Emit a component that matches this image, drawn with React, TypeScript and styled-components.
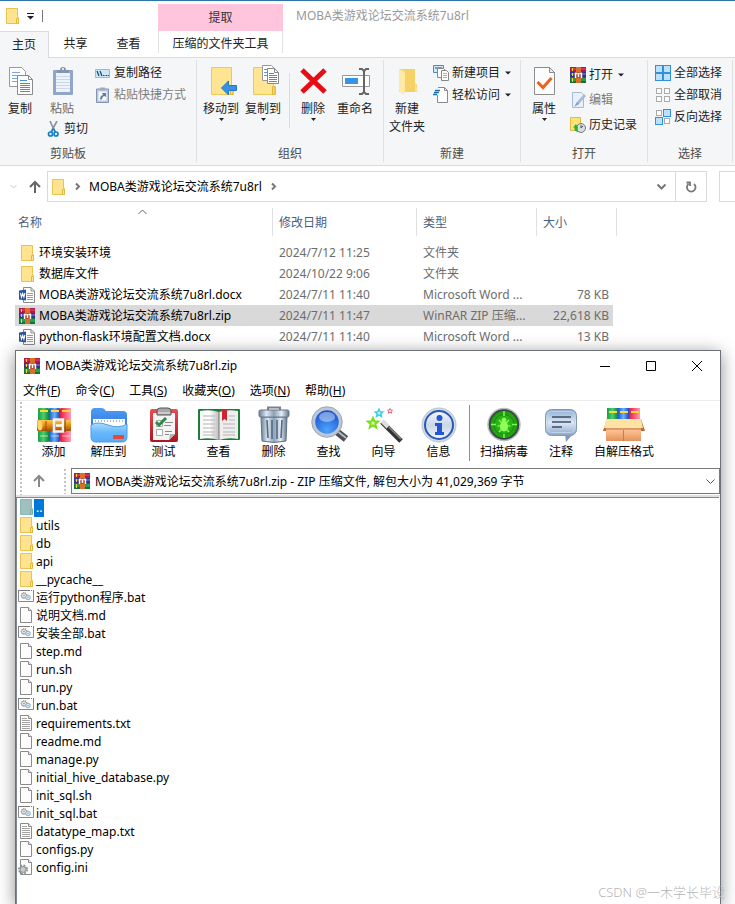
import React from "react";
import styled, { createGlobalStyle, css } from "styled-components";

const GlobalStyle = createGlobalStyle`
  * { box-sizing: border-box; }
  body {
    margin: 0;
    background: #fff;
    color: #000;
    font-family: "Noto Sans", "Noto Sans CJK SC", sans-serif;
    font-size: 12px;
    line-height: 18px;
  }
  button, input, select {
    font: inherit;
    color: inherit;
    background: none;
    border: 0;
    padding: 0;
    margin: 0;
    border-radius: 0;
  }
  svg { display: block; flex: none; }
`;

/* ---------- Explorer window ---------- */

const Desktop = styled.div`
  position: relative;
  display: flex;
  flex-direction: column;
  min-height: 100vh;
  overflow: hidden;
  border-top: 1px solid #2c74a4;
`;

const TitleBar = styled.header`
  display: flex;
  align-items: stretch;
  height: 30px;
`;

const QuickAccess = styled.div`
  display: flex;
  align-items: center;
  gap: 7px;
  width: 158px;
  padding-left: 4px;
`;

const QuickSeparator = styled.span`
  width: 1px;
  height: 12px;
  background: #777;
`;

const ContextTab = styled.div`
  display: flex;
  align-items: center;
  justify-content: center;
  width: 125px;
  margin-top: 3px;
  background: #ffc5dd;
  color: #333;
`;

const WindowTitle = styled.h1`
  margin: 0;
  padding: 6px 13px;
  font-size: 12px;
  font-weight: 400;
  color: #999;
`;

const TabStrip = styled.nav`
  display: flex;
  height: 27px;
  border-bottom: 1px solid #dadbdc;
`;

const Tab = styled.button<{ $width: number; $active?: boolean; $context?: boolean }>`
  width: ${(p) => p.$width}px;
  color: #222;
  ${(p) =>
    p.$active &&
    css`
      height: 27px;
      background: #f5f6f7;
      border: 1px solid #dadbdc;
      border-width: 1px 1px 0 0;
    `}
  ${(p) =>
    p.$context &&
    css`
      height: 22px;
      margin-left: 3px;
      padding-top: 4px;
      border: 1px solid #e2e2e2;
      border-width: 0 1px;
    `}
`;

const Ribbon = styled.section`
  display: flex;
  background: #f5f6f7;
  border-bottom: 1px solid #dadbdc;
`;

const Group = styled.div<{ $width: number }>`
  display: flex;
  flex-direction: column;
  flex: none;
  width: ${(p) => p.$width}px;
  margin: 2px 0 3px;
  border-right: 1px solid #e0e1e3;
`;

const GroupBody = styled.div<{ $pad?: number }>`
  display: flex;
  align-items: flex-start;
  height: 86px;
  padding-left: ${(p) => p.$pad ?? 0}px;
`;

const GroupLabel = styled.div<{ $shift?: boolean }>`
  line-height: 16px;
  color: #4c4c4c;
  text-align: center;
  padding-right: ${(p) => (p.$shift ? 60 : 0)}px;
`;

const BigButton = styled.button<{ $width: number; $muted?: boolean }>`
  display: flex;
  flex-direction: column;
  align-items: center;
  width: ${(p) => p.$width}px;
  padding-top: 5px;
  color: ${(p) => (p.$muted ? "#6d6d6d" : "#222")};
  svg:first-child { margin-bottom: 3px; }
`;

const SmallColumn = styled.div<{ $row?: number; $left?: number }>`
  display: grid;
  grid-auto-rows: ${(p) => p.$row ?? 22}px;
  padding-top: 2px;
  margin-left: ${(p) => p.$left ?? 0}px;
`;

const SmallButton = styled.button<{ $muted?: boolean }>`
  display: flex;
  align-items: center;
  gap: 3px;
  padding: 0 3px;
  white-space: nowrap;
  color: ${(p) => (p.$muted ? "#7c7c7c" : "#222")};
`;

const ClipboardColumn = styled.div`
  display: flex;
  flex-direction: column;
  height: 86px;
`;

const ClipboardTop = styled.div`
  display: flex;
  align-items: flex-start;
  height: 60px;
`;

const CutRow = styled.div`
  padding-left: 42px;
`;

const GroupDivider = styled.span`
  width: 1px;
  height: 55px;
  margin: 13px 2px 0 5px;
  background: #dcdddf;
`;

const AddressRow = styled.div`
  display: flex;
  height: 42px;
  padding: 5px 0 6px;
`;

const NavButton = styled.button<{ $width: number }>`
  display: grid;
  place-items: center;
  width: ${(p) => p.$width}px;
`;

const AddressBox = styled.div`
  display: flex;
  flex: 1;
  margin: 0 12px 0 2px;
  border: 1px solid #d9d9d9;
`;

const Crumbs = styled.nav`
  display: flex;
  align-items: center;
  flex: 1;
  gap: 6px;
  padding-left: 2px;
`;

const RefreshButton = styled(NavButton)`
  border-left: 1px solid #d9d9d9;
`;

const SearchInput = styled.input`
  width: 16px;
  border: 1px solid #d9d9d9;
  border-right: 0;
`;

const FileTable = styled.table`
  table-layout: fixed;
  width: 602px;
  margin-left: 15px;
  border-spacing: 0;
`;

const HeadCell = styled.th`
  position: relative;
  height: 34px;
  padding: 0;
  vertical-align: top;
  font-weight: 400;
`;

const SortButton = styled.button<{ $first?: boolean }>`
  display: block;
  width: 100%;
  height: 28px;
  padding: 2px 0 0 ${(p) => (p.$first ? 3 : 6)}px;
  text-align: left;
  color: #4a5f7f;
  border-right: 1px solid #e0e0e0;
`;

const SortMark = styled.span`
  position: absolute;
  top: 0;
  left: 122px;
`;

const FileRow = styled.tr<{ $selected?: boolean }>`
  td { background-color: ${(p) => (p.$selected ? "#d9d9d9" : "transparent")}; }
`;

const Cell = styled.td<{ $end?: boolean }>`
  height: 21px;
  padding: 0 0 0 6px;
  color: #6d6d6d;
  white-space: nowrap;
  ${(p) =>
    p.$end &&
    css`
      padding: 0 4px 0 0;
      text-align: right;
      border-right: 4px solid transparent;
      background-clip: padding-box;
    `}
`;

const NameCell = styled(Cell)`
  padding-left: 4px;
  color: #000;
`;

const FileName = styled.div`
  display: flex;
  align-items: center;
  gap: 4px;
`;

/* ---------- Archive window ---------- */

const ArchiveWindow = styled.main`
  position: relative;
  display: flex;
  flex-direction: column;
  flex: 1;
  margin: 3px 14px 0 15px;
  background: #fff;
  border: 1px solid #6c7078;
  border-bottom: 0;
  box-shadow: 0 3px 16px rgba(0, 0, 0, 0.45);
`;

const ArchiveTitle = styled.div`
  display: flex;
  align-items: center;
  gap: 5px;
  height: 30px;
  padding-left: 8px;
`;

const ArchiveName = styled.h2`
  flex: 1;
  margin: 0;
  font-size: 12px;
  font-weight: 400;
`;

const CaptionButtons = styled.div`
  display: flex;
`;

const CaptionButton = styled.button`
  display: grid;
  place-items: center;
  width: 46px;
  height: 30px;
`;

const MenuBar = styled.nav`
  display: flex;
  gap: 1px;
  height: 20px;
  border-bottom: 1px solid #ececec;
`;

const MenuButton = styled.button`
  padding: 0 7px;
`;

const Bars = styled.div`
  display: flex;
  border-bottom: 2px solid #dfe0e2;
`;

const Grip = styled.span`
  width: 2px;
  margin: 1px 0 0 4px;
  background: repeating-linear-gradient(#c4c4c4 0 2px, transparent 2px 4px);
`;

const BarRows = styled.div`
  flex: 1;
`;

const Tools = styled.div`
  display: flex;
  padding: 5px 0 0 4px;
  height: 66px;
`;

const Tool = styled.button<{ $width?: number }>`
  display: flex;
  flex-direction: column;
  align-items: center;
  width: ${(p) => p.$width ?? 55}px;
  white-space: nowrap;
`;

const ToolDivider = styled.span`
  width: 1px;
  height: 56px;
  margin: -1px 4px 0 3px;
  background: #909090;
`;

const PathRow = styled.div`
  display: flex;
  gap: 5px;
  height: 28px;
  padding: 1px 0 1px;
`;

const PathBox = styled.label`
  display: flex;
  align-items: center;
  flex: 1;
  gap: 5px;
  padding: 0 3px 0 2px;
  border: 1px solid #7a7a7a;
`;

const PathSelect = styled.select`
  appearance: none;
  flex: 1;
  height: 24px;
  padding-top: 2px;
  outline: none;
`;

const Listing = styled.ul`
  flex: 1;
  margin: 0 1px 0 0;
  padding: 1px 0 0 1px;
  list-style: none;
  border: 1px solid #828790;
  border-width: 1px 0 0 1px;
`;

const Entry = styled.button<{ $selected?: boolean }>`
  display: flex;
  align-items: flex-start;
  height: 18px;
  svg { ${(p) => p.$selected && "filter: sepia(1) hue-rotate(120deg) brightness(0.75);"} }
  span {
    padding: 0 2px;
    ${(p) => p.$selected && "background: #0078d7; color: #fff;"}
  }
`;

const Watermark = styled.div`
  position: absolute;
  right: 10px;
  bottom: 2px;
  font-size: 13px;
  font-weight: 300;
  line-height: 20px;
  color: #b4b4b4;
`;

/* ---------- Small icons ---------- */

const Folder = () => (
  <svg width="16" height="16" viewBox="0 0 16 16">
    <path d="M2.500.5h11v9h1v6h-12z" fill="#ffe390" stroke="#e9c54f" />
    <path d="M12.500 15.500v-5h2v5z" fill="#ffe79c" stroke="#e3b93a" />
  </svg>
);

const Rar = () => (
  <svg width="16" height="16" viewBox="0 0 16 16">
    <path d="M0 0h16v5H0z" fill="#a81c46" />
    <path d="M1 1h15v2H1z" fill="#d42f5a" />
    <path d="M0 5h16v5H0z" fill="#35328c" />
    <path d="M1 6h15v2H1z" fill="#5f5cc8" />
    <path d="M0 10h16v6H0z" fill="#12703a" />
    <path d="M1 11h15v3H1z" fill="#25a04a" />
    <path d="M2 1h1v3H2zM2 6h1v3H2zM2 11h1v4H2z" fill="#f3d33c" />
    <path d="M6 0h5v16H6z" fill="#d9702a" />
    <path d="M5 5h7v6H5z" fill="#bf4a20" />
    <path d="M5.500 11V6.500h2M11.500 11V6.500h-2M8.500 6v4" stroke="#fff" strokeWidth="1.400" fill="none" />
  </svg>
);

const Word = () => (
  <svg width="16" height="16" viewBox="0 0 16 16">
    <path d="M4.500.5h7.500l3.500 3.500v11.500h-11z" fill="#fff" stroke="#8a8a8a" />
    <path d="M12 .5V4h3.500" fill="none" stroke="#8a8a8a" />
    <path d="M8 6.500h6M8 8.500h6M8 10.500h6M8 12.500h6" stroke="#9a9a9a" />
    <path d="M0 3.500 7 2.500v11l-7-1z" fill="#2b579a" />
    <path d="m1.500 6 1 4L3.700 6.500 4.900 10l1-4" fill="none" stroke="#fff" strokeWidth="1.100" />
  </svg>
);

const Page = () => (
  <svg width="16" height="16" viewBox="0 0 16 16">
    <path d="M2.500.5h8l3 3v12h-11z" fill="#fdfdfd" stroke="#8b8b8b" />
    <path d="M10.500.5v3h3" fill="#eee" stroke="#8b8b8b" />
  </svg>
);

const TextPage = () => (
  <svg width="16" height="16" viewBox="0 0 16 16">
    <path d="M2.500.5h8l3 3v12h-11z" fill="#fdfdfd" stroke="#8b8b8b" />
    <path d="M10.500.5v3h3" fill="#eee" stroke="#8b8b8b" />
    <path d="M4 3.500h5M4 5.500h8M4 7.500h8M4 9.500h8M4 11.500h8M4 13.500h8" stroke="#a3a3a3" />
  </svg>
);

const Batch = () => (
  <svg width="16" height="16" viewBox="0 0 16 16">
    <path d="M.5 1.500h15v11H.5z" fill="#fff" stroke="#86888c" />
    <path d="M0 1.500h16" stroke="#77797d" />
    <path d="M12 1.500h1M14 1.500h1" stroke="#fff" />
    <circle cx="6" cy="6.500" r="2.500" fill="#ececec" stroke="#a2a2a2" />
    <circle cx="6" cy="6.500" r="3" fill="none" stroke="#8e8e8e" strokeDasharray="1 1.100" />
    <circle cx="6" cy="6.500" r=".8" fill="#888" />
    <circle cx="10" cy="8.500" r="2.300" fill="#d8ecf7" stroke="#80b2d0" />
    <circle cx="10" cy="8.500" r=".7" fill="#6fa5c6" />
  </svg>
);

const Ini = () => (
  <svg width="16" height="16" viewBox="0 0 16 16">
    <path d="M2.500.5h8l3 3v12h-11z" fill="#fdfdfd" stroke="#8b8b8b" />
    <path d="M10.500.5v3h3" fill="#eee" stroke="#8b8b8b" />
    <circle cx="5" cy="10.500" r="4" fill="none" stroke="#8d9093" strokeWidth="2" strokeDasharray="1.800 1.340" />
    <circle cx="5" cy="10.500" r="2.800" fill="#dadcde" stroke="#999c9f" strokeWidth="1.300" />
    <circle cx="5" cy="10.500" r="1" fill="#fff" stroke="#999" strokeWidth=".6" />
  </svg>
);

const Caret = () => (
  <svg width="5" height="4" viewBox="0 0 5 4">
    <path d="M0 0h5L2.500 3z" fill="#222" />
  </svg>
);

const SmallCaret = () => (
  <svg width="9" height="6" viewBox="0 0 9 6">
    <path d="M2 1.500h6L5 4.500z" fill="#222" />
  </svg>
);

const CustomizeMark = () => (
  <svg width="8" height="8" viewBox="0 0 8 8">
    <path d="M0 1.500h7" stroke="#222" />
    <path d="M0 4h7L3.500 7.500z" fill="#222" />
  </svg>
);

const Chevron = ({ d, color = "#777", width = 2 }: { d: string; color?: string; width?: number }) => (
  <svg width="11" height="11" viewBox="0 0 11 11">
    <path d={d} fill="none" stroke={color} strokeWidth={width} />
  </svg>
);

const RIGHT = "m4 2.500 3 3-3 3";
const DOWN = "M1.500 3.500 5.500 7.500 9.500 3.500";

const UpArrow = ({ color }: { color: string }) => (
  <svg width="14" height="14" viewBox="0 0 14 14">
    <path d="M7 13V2M2 7l5-5 5 5" fill="none" stroke={color} strokeWidth="2" />
  </svg>
);

const PathIcon = () => (
  <svg width="16" height="16" viewBox="0 0 16 16">
    <path d="M.5 4.500h14v8H.5z" fill="#cce8f8" stroke="#8dbfdd" />
    <path d="m2 6 2 5M5 6l2 5" stroke="#14507a" strokeWidth="1.300" />
    <path d="M8 10.500h1.500M10.500 10.500H12M12.700 10.500H14" stroke="#14507a" />
  </svg>
);

const ShortcutIcon = () => (
  <svg width="16" height="16" viewBox="0 0 16 16">
    <path d="M1.500 2h12v13.500h-12z" fill="#bfcbdd" stroke="#8194b4" />
    <path d="M5 .5h5v3H5z" fill="#9caac3" />
    <path d="M3.500 4.500h8v9h-8z" fill="#f5f8fc" />
    <path d="M5 12.500c0-2.500 1-4 3-4.500L7 6h4v4L9.500 9C7.500 9.500 7 11 7 12.500z" fill="#637ba5" />
  </svg>
);

const Scissors = () => (
  <svg width="16" height="16" viewBox="0 0 16 16">
    <path d="m5 0 5 11M12 0 6 11" stroke="#8795a2" strokeWidth="1.700" />
    <circle cx="5.500" cy="13" r="2" fill="none" stroke="#1680c4" strokeWidth="1.700" />
    <circle cx="11" cy="13" r="2" fill="none" stroke="#1680c4" strokeWidth="1.700" />
    <path d="m8.500 7.500-2 3.500M8.500 7.500l2 3.500" stroke="#1680c4" strokeWidth="1.500" />
  </svg>
);

const NewItem = () => (
  <svg width="16" height="16" viewBox="0 0 16 16">
    <path d="M.5.5h10v7H.5z" fill="#cfe9f8" stroke="#4b8db8" />
    <path d="M2 2h7v2H2z" fill="#5da5d0" />
    <path d="M4.500 3.500h6l2 2v7h-8z" fill="#fff" stroke="#888" />
    <path d="M8.500 5.500h5l2 2v8h-7z" fill="#fff" stroke="#888" />
    <path d="M10 8.500h4M10 10.500h4M10 12.500h4" stroke="#8db4e8" />
  </svg>
);

const EasyAccess = () => (
  <svg width="16" height="16" viewBox="0 0 16 16">
    <path d="M5 .5h6.500l3 3v12H4.500V8" fill="#fff" stroke="#8a8a8a" />
    <path d="M11.500.5v3h3" fill="none" stroke="#8a8a8a" />
    <path d="M2 3.500h5M1 5.500h5M0 7.500h4" stroke="#1c6fb3" strokeWidth="1.400" />
  </svg>
);

const EditIcon = () => (
  <svg width="16" height="16" viewBox="0 0 16 16">
    <path d="M2.500.5h9l2 2v13h-11z" fill="#e9f0f9" stroke="#a9bad3" />
    <path d="m6 13 1-3 7-8 2 2-7 8z" fill="#a8bcd9" />
    <path d="m4 15 3-5 2 2z" fill="#839dc5" />
  </svg>
);

const HistoryIcon = () => (
  <svg width="16" height="16" viewBox="0 0 16 16">
    <path d="M.5.5h10v13H.5z" fill="#ffe27a" stroke="#e0ba45" />
    <circle cx="11" cy="11" r="4.500" fill="#d8dcdc" stroke="#747c7c" />
    <path d="M11 8v3l2-2" fill="none" stroke="#555" />
    <path d="M3 10.500 6 7l2 3.500c-1 2 0 3.500 1 4.500-3 0-5-1.500-4.500-4.500z" fill="#27b531" />
  </svg>
);

type TilesProps = { on: boolean[] };
const Tiles = ({ on }: TilesProps) => (
  <svg width="16" height="16" viewBox="0 0 16 16">
    {on.map((active, i) => {
      const x = (i % 2) * 8;
      const y = i > 1 ? 8 : 0;
      return active ? (
        <rect key={i} x={x + 0.5} y={y + 0.5} width="7" height="7" fill="#bfe0fa" stroke="#2f90dc" />
      ) : (
        <rect key={i} x={x + 1.5} y={y + 1.5} width="5" height="5" fill="#fff" stroke="#aaa" />
      );
    })}
  </svg>
);

/* ---------- Ribbon icons, 32px ---------- */

const CopyIcon = () => (
  <svg width="32" height="32" viewBox="0 0 32 32">
    <path d="M5.500 2.500h12l4 4v15h-16z" fill="#fff" stroke="#999" />
    <path d="M8 7.500h8M8 10.500h8M8 13.500h8M8 16.500h8" stroke="#76a7e2" />
    <path d="M13.500 10.500h11l4 4v15h-15z" fill="#fff" stroke="#8b8b8b" />
    <path d="M24.500 10.500v4h4" fill="none" stroke="#8b8b8b" />
    <path d="M16 15.500h7M16 18.500h10M16 20.500h10M16 22.500h10M16 24.500h10M16 26.500h10" stroke="#4a8bdc" />
  </svg>
);

const PasteIcon = () => (
  <svg width="32" height="32" viewBox="0 0 32 32">
    <rect x="7" y="5" width="20" height="25" rx="1" fill="#8fa5c9" />
    <path d="M10 8h14v19H10z" fill="#eef3fa" />
    <path d="M10 11.500h14M10 14.500h14M10 17.500h14M10 20.500h14M10 23.500h14" stroke="#cbd8e9" />
    <path d="M11 8V5h3a3 3 0 0 1 6 0h3v3z" fill="#8594b0" />
    <circle cx="17" cy="4" r="1" fill="#fff" />
  </svg>
);

const FolderBase = () => (
  <>
    <path d="M6.500 2.500h20v19h2v8h-22z" fill="#ffe591" stroke="#ecc95b" />
    <path d="M25.500 29.500v-8H28v8z" fill="#f8d671" stroke="#e2b73d" />
  </>
);

const MoveTo = () => (
  <svg width="32" height="32" viewBox="0 0 32 32">
    <FolderBase />
    <path d="m16.500 23 7-7v4.500h8v5h-8V30z" fill="#3692e4" stroke="#2278c4" />
  </svg>
);

const CopyTo = () => (
  <svg width="32" height="32" viewBox="0 0 32 32">
    <FolderBase />
    <path d="M15.500.5h9l3 3v12h-12z" fill="#fff" stroke="#999" />
    <path d="M17 4.500h6M17 7.500h8M17 10.500h8" stroke="#5b97df" />
    <path d="M20.500 3.500h7l4 4v11h-11z" fill="#fff" stroke="#888" />
    <path d="M27.500 3.500v4h4" fill="none" stroke="#888" />
    <path d="M22 8.500h5M22 10.500h8M22 12.500h8M22 14.500h8M22 16.500h8" stroke="#4a8bdc" />
  </svg>
);

const DeleteIcon = () => (
  <svg width="32" height="32" viewBox="0 0 32 32">
    <path d="m5 5 23 22M28 5 5 27" stroke="#e50e16" strokeWidth="5" />
  </svg>
);

const RenameIcon = () => (
  <svg width="32" height="32" viewBox="0 0 32 32">
    <path d="M3.500 10.500h27v11h-27z" fill="#fff" stroke="#999" />
    <path d="M6 13h13v6H6z" fill="#3394e8" />
    <path d="M25 6v21M20 4h3l2 2 2-2h3M20 29h3l2-2 2 2h3" fill="none" stroke="#666" strokeWidth="2" />
  </svg>
);

const NewFolder = () => (
  <svg width="32" height="32" viewBox="0 0 32 32">
    <path d="M8 4h16v14l2 2v7H8z" fill="#f6d266" />
    <path d="m8 4 6 3v18l-1 5-5-4z" fill="#ffe9a8" />
    <path d="M24 18v9h3z" fill="#ffe18a" />
  </svg>
);

const PropertiesIcon = () => (
  <svg width="32" height="32" viewBox="0 0 32 32">
    <path d="M6.500 2.500h15l5 5v22h-20z" fill="#fcfcfc" stroke="#8c8c8c" />
    <path d="M21.500 2.500v5h5z" fill="#eee" stroke="#8c8c8c" />
    <path d="m9.500 17 5.500 5.500L23.500 13" fill="none" stroke="#f0601d" strokeWidth="3" />
  </svg>
);

/* ---------- Archive toolbar icons ---------- */

const ToolSvg = ({ children, width = 44 }: { children: React.ReactNode; width?: number }) => (
  <svg width={width} height="37" viewBox={`0 0 ${width} 37`}>
    {children}
  </svg>
);

const Gradient = ({ id, stops, flat }: { id: string; stops: string[]; flat?: boolean }) => (
  <linearGradient id={id} x1="0" y1="0" x2={flat ? 1 : 0} y2={flat ? 0 : 1}>
    {stops.map((c, i) => (
      <stop key={i} offset={i / (stops.length - 1)} stopColor={c} />
    ))}
  </linearGradient>
);

const AddIcon = () => (
  <ToolSvg>
    <defs>
      <Gradient id="bookG" flat stops={["#1f9a45", "#46d16c", "#14803a"]} />
      <Gradient id="bookB" flat stops={["#1d55d8", "#69b1ff", "#1c46bd"]} />
      <Gradient id="bookR" flat stops={["#d81d3d", "#ff5877", "#f7a1b8"]} />
      <Gradient id="belt" stops={["#ffc84c", "#e88812", "#9c4f08"]} />
    </defs>
    <rect x="6" y="2" width="11" height="34" rx="1" fill="url(#bookG)" />
    <rect x="17" y="2" width="11" height="34" rx="1" fill="url(#bookB)" />
    <rect x="28" y="2" width="11" height="34" rx="1" fill="url(#bookR)" />
    <path d="M8 5h8M19 5h8M30 5h8" stroke="#ffd92e" strokeWidth="2" />
    <path d="M8 30h8M19 30h8M30 30h8" stroke="#fff" strokeOpacity=".3" strokeWidth="2" />
    <rect x="5" y="14" width="34" height="11" rx="1" fill="url(#belt)" />
    <ellipse cx="8" cy="19.500" rx="2.500" ry="5" fill="#ffd568" />
    <path d="M14 15v9" stroke="#9a4d08" />
    <rect x="22" y="13.500" width="9" height="12" fill="none" stroke="#f2f2f2" strokeWidth="2.500" />
    <path d="M24 19.500h7" stroke="#fff" strokeWidth="2.500" />
    <path d="M33 14v12" stroke="#71400d" />
  </ToolSvg>
);

const ExtractIcon = () => (
  <ToolSvg>
    <defs>
      <Gradient id="dirBack" stops={["#4e9cf4", "#276ad9"]} />
      <Gradient id="dirFront" stops={["#aadcff", "#67b7fb", "#5aabf5"]} />
    </defs>
    <path d="M4 6q0-4 4-4h7q2 0 4 3h17q4 0 4 4v20H4z" fill="url(#dirBack)" />
    <path d="M6 13h32v10H6z" fill="#fff" />
    <path d="M8 15h28" stroke="#b2b8c2" strokeWidth="2" strokeDasharray="1 2" />
    <path d="M4 19q6-4 17 0t19-1v13q0 5-5 5H9q-5 0-5-5z" fill="url(#dirFront)" stroke="#4d9beb" />
    <rect x="26" y="29" width="11" height="4" rx="1" fill="#e24a38" />
  </ToolSvg>
);

const TestIcon = () => (
  <ToolSvg>
    <defs><Gradient id="board" stops={["#f04b50", "#a91520"]} /></defs>
    <rect x="8" y="3" width="28" height="33" rx="2" fill="url(#board)" />
    <path d="M11 7h22v21l-6 6H11z" fill="#f4f4f4" />
    <path d="m27 34 1-6h5z" fill="#b4b4b4" />
    <path d="M15 9V5q0-3 3-3h8q3 0 3 3v4z" fill="#a9a9a9" stroke="#555" />
    <path d="M16 7h12" stroke="#eee" />
    <path d="M14.500 14.500h6v6h-6zM14.500 23.500h6v6h-6z" fill="#fff" stroke="#aaa" />
    <path d="m14 16 3 3 7-7" fill="none" stroke="#268e42" strokeWidth="3" />
    <path d="M23 16.500h8M22 19.500h7M23 25.500h7M23 28.500h4" stroke="#8b8b8b" />
  </ToolSvg>
);

const ViewIcon = () => (
  <ToolSvg>
    <defs><Gradient id="pageL" flat stops={["#f6f6f6", "#fff", "#bdbdbd"]} /></defs>
    <rect x="1" y="3" width="42" height="31" rx="1" fill="#1c7c38" />
    <path d="M3 5q10-2 19 1v28q-9-3-19-1z" fill="url(#pageL)" />
    <path d="M41 5q-10-2-19 1v28q9-3 19-1z" fill="#eeeeee" />
    <path d="M6 10h12M6 14h12M6 18h12M6 22h12M6 26h12M6 29h12M26 18h12M26 22h12M26 26h12M26 29h12M32 10h6M32 14h6" stroke="#b3b3b3" />
    <path d="M22 6v28" stroke="#777" />
    <path d="M25 4h5v11l-2.500-2L25 15z" fill="#cc2630" />
  </ToolSvg>
);

const TrashIcon = () => (
  <ToolSvg>
    <defs><Gradient id="bin" flat stops={["#6c7f95", "#dce7f0", "#8da1b6", "#e5edf4", "#60758c"]} /></defs>
    <path d="M16 4V1.500h12V4" fill="none" stroke="#76818d" strokeWidth="2" />
    <path d="M9 11h26l-1 24q-12 3-24 0z" fill="url(#bin)" stroke="#607286" />
    <path d="m15 14 1 18M20 14v19M25 14v19M30 14l-1 18" stroke="#546a83" strokeWidth="1.600" />
    <rect x="7" y="4" width="30" height="7" rx="1.500" fill="url(#bin)" stroke="#65778b" />
  </ToolSvg>
);

const FindIcon = () => (
  <ToolSvg>
    <defs>
      <radialGradient id="lens" cx=".5" cy=".8" r=".8">
        <stop offset="0" stopColor="#4ca5ff" />
        <stop offset="1" stopColor="#1748c5" />
      </radialGradient>
    </defs>
    <path d="m29 25 10 8" stroke="#4c5055" strokeWidth="7" />
    <path d="m29 24 10 8" stroke="#b4b9bf" strokeWidth="2" />
    <circle cx="20" cy="16" r="13.500" fill="url(#lens)" stroke="#bcc7d5" strokeWidth="3.500" />
    <circle cx="20" cy="16" r="15.300" fill="none" stroke="#8f9bab" strokeWidth=".8" />
    <ellipse cx="20" cy="11" rx="8" ry="5" fill="#fff" opacity=".4" />
  </ToolSvg>
);

const starPath = "M0-5 1.500-1.700 5-1.500 2.300.9 3.200 4.500 0 2.500-3.200 4.500-2.300.9-5-1.500-1.500-1.700z";

const WizardIcon = () => (
  <ToolSvg>
    <path d="m20 16 19 19" stroke="#333" strokeWidth="5" />
    <path d="m20 15 6 6" stroke="#ddd" strokeWidth="4" />
    <path d="m27 21 12 12" stroke="#8a8a8a" strokeWidth="1.500" />
    <path d={starPath} transform="translate(11 17)" fill="#d7ff8c" stroke="#7add1c" strokeWidth="2" />
    <path d={starPath} transform="translate(17 7) scale(.75)" fill="#d9fbff" stroke="#37cfee" strokeWidth="2" />
    <path d={starPath} transform="translate(28 5) scale(.5)" fill="#fff" stroke="#f0646c" strokeWidth="2" />
  </ToolSvg>
);

const InfoIcon = () => (
  <ToolSvg>
    <defs><Gradient id="disc" stops={["#f5f8fc", "#cbd7e6", "#f0f4f8"]} /></defs>
    <circle cx="22" cy="19" r="17" fill="#d3dae3" stroke="#bac4cf" />
    <circle cx="22" cy="19" r="14" fill="url(#disc)" stroke="#2857bd" strokeWidth="2" />
    <circle cx="22.500" cy="12" r="3" fill="#2455d3" />
    <path d="M18 17h7v9h2v3h-9v-3h2v-6h-2z" fill="#2455d3" />
  </ToolSvg>
);

const ScanIcon = () => (
  <ToolSvg>
    <defs>
      <radialGradient id="radar">
        <stop offset="0" stopColor="#37d01c" />
        <stop offset="1" stopColor="#1f9a12" />
      </radialGradient>
    </defs>
    <circle cx="22" cy="18.500" r="16" fill="#3c4346" stroke="#b8bdbf" strokeWidth="1.500" />
    <circle cx="22" cy="18.500" r="13.500" fill="url(#radar)" />
    <circle cx="22" cy="18.500" r="10" fill="none" stroke="#178914" />
    <path d="M22 5v5M22 28v4M9 18.500h5M30 18.500h5" stroke="#7cf957" strokeWidth="1.500" />
    <ellipse cx="22" cy="20.500" rx="4" ry="5" fill="#92ff58" />
    <circle cx="22" cy="14" r="2.300" fill="#92ff58" />
    <path d="m17 14 3 3M27 14l-3 3M15.500 20h13M17 26l3-3M27 26l-3-3" stroke="#92ff58" strokeWidth="1.200" />
  </ToolSvg>
);

const CommentIcon = () => (
  <ToolSvg>
    <defs><Gradient id="bubble" stops={["#8fabd0", "#dce8f6", "#8da6c8"]} /></defs>
    <path d="M26 28h8l-7 8z" fill="#899bb3" />
    <rect x="6.500" y="3.500" width="31" height="26" rx="6" fill="url(#bubble)" stroke="#8398b5" />
    <rect x="8.500" y="5.500" width="27" height="21" rx="4" fill="none" stroke="#c2d2e8" />
    <path d="M13 11h19M13 16h19M13 21h10" stroke="#3c4c61" strokeWidth="1.600" />
  </ToolSvg>
);

const SfxIcon = () => (
  <ToolSvg>
    <defs><Gradient id="carton" stops={["#e49a67", "#ffc08f", "#e2935d"]} /></defs>
    <path d="M5 2h11v12H5z" fill="url(#bookG)" />
    <path d="M16 2h11v12H16z" fill="url(#bookB)" />
    <path d="M27 2h11v12H27z" fill="url(#bookR)" />
    <path d="M7 6h8M18 6h8M29 6h8" stroke="#ffd92e" strokeWidth="2" />
    <path d="M5 13 1 25h4zM39 13l4 12h-4z" fill="#b8653a" />
    <path d="M4 14h35v21H4z" fill="url(#carton)" />
    <path d="M4 13h35l2 9H2z" fill="#ffe3a2" />
    <path d="M3 23h38" stroke="#bd794c" />
    <path d="M21.500 24v11" stroke="#c37c50" />
  </ToolSvg>
);

/* ---------- Data ---------- */

const files = [
  { icon: Folder, name: "环境安装环境", date: "2024/7/12 11:25", type: "文件夹", size: "" },
  { icon: Folder, name: "数据库文件", date: "2024/10/22 9:06", type: "文件夹", size: "" },
  { icon: Word, name: "MOBA类游戏论坛交流系统7u8rl.docx", date: "2024/7/11 11:40", type: "Microsoft Word ...", size: "78 KB" },
  { icon: Rar, name: "MOBA类游戏论坛交流系统7u8rl.zip", date: "2024/7/11 11:47", type: "WinRAR ZIP 压缩...", size: "22,618 KB", selected: true },
  { icon: Word, name: "python-flask环境配置文档.docx", date: "2024/7/11 11:40", type: "Microsoft Word ...", size: "13 KB" },
];

const menus = [
  ["文件", "F"], ["命令", "C"], ["工具", "S"], ["收藏夹", "O"], ["选项", "N"], ["帮助", "H"],
];

const tools = [
  { label: "添加", icon: AddIcon },
  { label: "解压到", icon: ExtractIcon },
  { label: "测试", icon: TestIcon },
  { label: "查看", icon: ViewIcon },
  { label: "删除", icon: TrashIcon },
  { label: "查找", icon: FindIcon },
  { label: "向导", icon: WizardIcon },
  { label: "信息", icon: InfoIcon },
];

const extraTools = [
  { label: "扫描病毒", icon: ScanIcon, width: 60 },
  { label: "注释", icon: CommentIcon, width: 54 },
  { label: "自解压格式", icon: SfxIcon, width: 72 },
];

const entries: [React.ComponentType, string][] = [
  [Folder, ".."],
  [Folder, "utils"],
  [Folder, "db"],
  [Folder, "api"],
  [Folder, "__pycache__"],
  [Batch, "运行python程序.bat"],
  [Page, "说明文档.md"],
  [Batch, "安装全部.bat"],
  [Page, "step.md"],
  [Page, "run.sh"],
  [Page, "run.py"],
  [Batch, "run.bat"],
  [TextPage, "requirements.txt"],
  [Page, "readme.md"],
  [Page, "manage.py"],
  [Page, "initial_hive_database.py"],
  [Page, "init_sql.sh"],
  [Batch, "init_sql.bat"],
  [TextPage, "datatype_map.txt"],
  [Page, "configs.py"],
  [Ini, "config.ini"],
];

/* ---------- Sections ---------- */

const ExplorerRibbon = () => (
  <Ribbon>
    <Group $width={197}>
      <ClipboardColumn>
        <ClipboardTop>
          <BigButton $width={40}><CopyIcon />复制</BigButton>
          <BigButton $width={44} $muted><PasteIcon />粘贴</BigButton>
          <SmallColumn $left={8}>
            <SmallButton><PathIcon /><span>复制路径</span></SmallButton>
            <SmallButton $muted><ShortcutIcon /><span>粘贴快捷方式</span></SmallButton>
          </SmallColumn>
        </ClipboardTop>
        <CutRow>
          <SmallButton><Scissors /><span>剪切</span></SmallButton>
        </CutRow>
      </ClipboardColumn>
      <GroupLabel $shift>剪贴板</GroupLabel>
    </Group>
    <Group $width={187}>
      <GroupBody $pad={3}>
        <BigButton $width={42}><MoveTo />移动到<Caret /></BigButton>
        <BigButton $width={42}><CopyTo />复制到<Caret /></BigButton>
        <GroupDivider />
        <BigButton $width={42}><DeleteIcon />删除<Caret /></BigButton>
        <BigButton $width={42}><RenameIcon />重命名</BigButton>
      </GroupBody>
      <GroupLabel>组织</GroupLabel>
    </Group>
    <Group $width={137}>
      <GroupBody>
        <BigButton $width={46}><NewFolder />新建<br />文件夹</BigButton>
        <SmallColumn>
          <SmallButton><NewItem /><span>新建项目</span><SmallCaret /></SmallButton>
          <SmallButton><EasyAccess /><span>轻松访问</span><SmallCaret /></SmallButton>
        </SmallColumn>
      </GroupBody>
      <GroupLabel>新建</GroupLabel>
    </Group>
    <Group $width={127}>
      <GroupBody>
        <BigButton $width={46}><PropertiesIcon />属性<Caret /></BigButton>
        <SmallColumn $row={25}>
          <SmallButton><Rar /><span>打开</span><SmallCaret /></SmallButton>
          <SmallButton $muted><EditIcon /><span>编辑</span></SmallButton>
          <SmallButton><HistoryIcon /><span>历史记录</span></SmallButton>
        </SmallColumn>
      </GroupBody>
      <GroupLabel>打开</GroupLabel>
    </Group>
    <Group $width={85}>
      <GroupBody $pad={4}>
        <SmallColumn>
          <SmallButton><Tiles on={[true, true, true, true]} /><span>全部选择</span></SmallButton>
          <SmallButton><Tiles on={[false, false, false, false]} /><span>全部取消</span></SmallButton>
          <SmallButton><Tiles on={[false, true, true, false]} /><span>反向选择</span></SmallButton>
        </SmallColumn>
      </GroupBody>
      <GroupLabel>选择</GroupLabel>
    </Group>
  </Ribbon>
);

const ExplorerFiles = () => (
  <FileTable>
    <colgroup>
      <col width="258" />
      <col width="144" />
      <col width="120" />
      <col width="80" />
    </colgroup>
    <thead>
      <tr>
        <HeadCell>
          <SortButton $first>名称</SortButton>
          <SortMark><Chevron d="M1.500 6 5.500 2l4 4" color="#666" width={1} /></SortMark>
        </HeadCell>
        <HeadCell><SortButton>修改日期</SortButton></HeadCell>
        <HeadCell><SortButton>类型</SortButton></HeadCell>
        <HeadCell><SortButton>大小</SortButton></HeadCell>
      </tr>
    </thead>
    <tbody>
      {files.map((f) => (
        <FileRow key={f.name} $selected={f.selected}>
          <NameCell><FileName><f.icon />{f.name}</FileName></NameCell>
          <Cell>{f.date}</Cell>
          <Cell>{f.type}</Cell>
          <Cell $end>{f.size}</Cell>
        </FileRow>
      ))}
    </tbody>
  </FileTable>
);

const Archive = () => (
  <ArchiveWindow>
    <ArchiveTitle>
      <Rar />
      <ArchiveName>MOBA类游戏论坛交流系统7u8rl.zip</ArchiveName>
      <CaptionButtons>
        <CaptionButton aria-label="最小化">
          <svg width="10" height="10"><path d="M0 5.500h10" stroke="#000" /></svg>
        </CaptionButton>
        <CaptionButton aria-label="最大化">
          <svg width="10" height="10"><path d="M.5.5h9v9h-9z" fill="none" stroke="#000" /></svg>
        </CaptionButton>
        <CaptionButton aria-label="关闭">
          <svg width="10" height="10"><path d="m0 0 10 10M10 0 0 10" stroke="#000" /></svg>
        </CaptionButton>
      </CaptionButtons>
    </ArchiveTitle>
    <MenuBar>
      {menus.map(([label, key]) => (
        <MenuButton key={key}>{label}(<u>{key}</u>)</MenuButton>
      ))}
    </MenuBar>
    <Bars>
      <Grip />
      <BarRows>
        <Tools>
          {tools.map((t) => (
            <Tool key={t.label}><t.icon />{t.label}</Tool>
          ))}
          <ToolDivider />
          {extraTools.map((t) => (
            <Tool key={t.label} $width={t.width}><t.icon />{t.label}</Tool>
          ))}
        </Tools>
        <PathRow>
          <NavButton $width={33} aria-label="向上"><UpArrow color="#888" /></NavButton>
          <Grip />
          <PathBox>
            <Rar />
            <PathSelect aria-label="路径">
              <option>MOBA类游戏论坛交流系统7u8rl.zip - ZIP 压缩文件, 解包大小为 41,029,369 字节</option>
            </PathSelect>
            <Chevron d={DOWN} color="#555" width={1} />
          </PathBox>
        </PathRow>
      </BarRows>
    </Bars>
    <Listing>
      {entries.map(([Icon, name], i) => (
        <li key={name}>
          <Entry $selected={i === 0}><Icon /><span>{name}</span></Entry>
        </li>
      ))}
    </Listing>
  </ArchiveWindow>
);

export default function App() {
  return (
    <>
      <GlobalStyle />
      <Desktop>
        <TitleBar>
          <QuickAccess>
            <Folder />
            <CustomizeMark />
            <QuickSeparator />
          </QuickAccess>
          <ContextTab>提取</ContextTab>
          <WindowTitle>MOBA类游戏论坛交流系统7u8rl</WindowTitle>
        </TitleBar>
        <TabStrip>
          <Tab $width={49} $active>主页</Tab>
          <Tab $width={53}>共享</Tab>
          <Tab $width={53}>查看</Tab>
          <Tab $width={125} $context>压缩的文件夹工具</Tab>
        </TabStrip>
        <ExplorerRibbon />
        <AddressRow>
          <NavButton $width={24} aria-label="最近位置"><Chevron d="M3.500 4l3 3 3-3" color="#ccc" width={1} /></NavButton>
          <NavButton $width={21} aria-label="上移"><UpArrow color="#666" /></NavButton>
          <AddressBox>
            <Crumbs>
              <Folder />
              <Chevron d={RIGHT} />
              <button>MOBA类游戏论坛交流系统7u8rl</button>
              <Chevron d={RIGHT} />
            </Crumbs>
            <NavButton $width={28} aria-label="展开地址"><Chevron d={DOWN} /></NavButton>
            <RefreshButton $width={31} aria-label="刷新">
              <svg width="12" height="12" viewBox="0 0 12 12">
                <path d="M9 3a4.300 4.300 0 1 1-5.500 0M1.500 1.500H5V5" fill="none" stroke="#777" strokeWidth="1.800" />
              </svg>
            </RefreshButton>
          </AddressBox>
          <SearchInput aria-label="搜索" />
        </AddressRow>
        <ExplorerFiles />
        <Archive />
        <Watermark>CSDN @一木学长毕设</Watermark>
      </Desktop>
    </>
  );
}
